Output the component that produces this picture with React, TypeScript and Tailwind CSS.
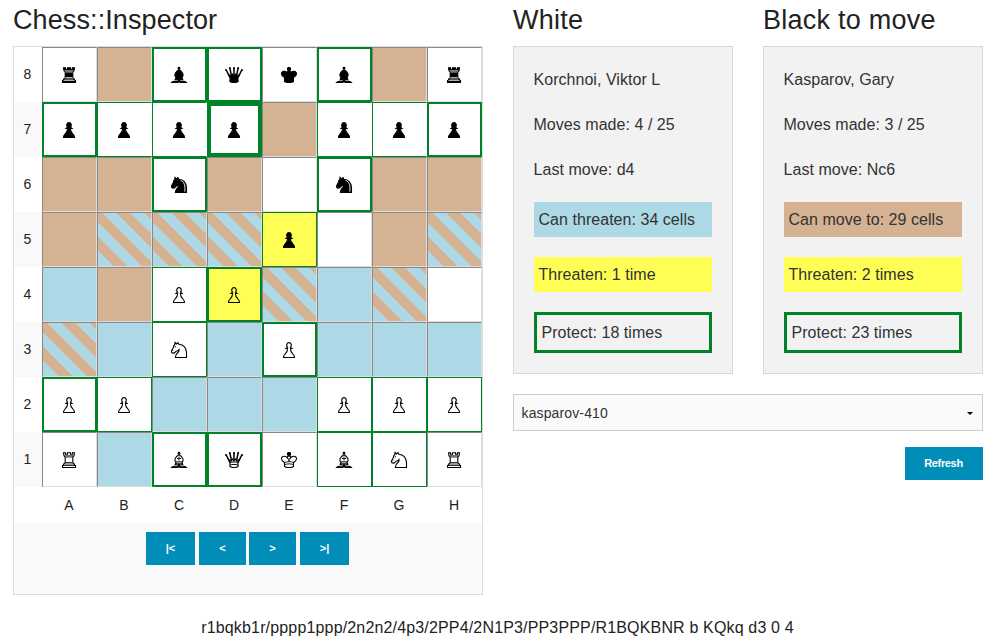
import React from "react";

type Fill = "w" | "t" | "b" | "s" | "y";
type Edge = "n" | "1" | "o" | "2" | "4";

const fills: Record<Fill, string> = {
  w: "bg-white",
  t: "bg-[#d4b292]",
  b: "bg-[#acd9e5]",
  s: "bg-[repeating-linear-gradient(45deg,#d4b292,#d4b292_0.7px,#acd9e5_0.7px,#acd9e5_10.7px,#d4b292_10.7px,#d4b292_20px)]",
  y: "bg-[#fffe54]",
};

const edges: Record<Edge, string> = {
  n: "border border-t-[#888] border-l-[#888] border-r-[#ddd] border-b-[#ddd]",
  "1": "border border-[#008328]",
  o: "border border-[#008328] border-r-white",
  "2": "border-2 border-[#008328]",
  "4": "border-4 border-[#008328]",
};

// Each square is written as fill, edge and an optional piece (upper case is white).
const board: string[][] = [
  ["wnr", "tn", "w2b", "w2q", "wnk", "w2b", "tn", "wnr"],
  ["w2p", "wop", "wop", "w4p", "tn", "wop", "wop", "w2p"],
  ["tn", "tn", "w2n", "tn", "wn", "w2n", "tn", "tn"],
  ["tn", "sn", "sn", "sn", "y1p", "wn", "tn", "sn"],
  ["bn", "tn", "w1P", "y2P", "sn", "bn", "sn", "wn"],
  ["sn", "bn", "w1N", "bn", "w2P", "bn", "bn", "bn"],
  ["w2P", "w1P", "bn", "bn", "bn", "w1P", "w1P", "w1P"],
  ["wnR", "bn", "w2B", "w2Q", "wnK", "w1B", "w1N", "wnR"],
];

function Piece({ kind }: { kind: string }) {
  const black = kind === kind.toLowerCase();
  const line = { stroke: "#000", strokeWidth: 1.1, fill: black ? "#000" : "none" };
  let art: React.ReactNode = null;
  switch (kind.toLowerCase()) {
    case "p":
      art = (
        <path
          {...line}
          d="M7.5 5.2C6 3.400 6.800.6 9 .6s3 2.800 1.500 4.600L12 6.500h-1.600c0 3 .9 4.300 2.600 5.600 1 .8 1.500 1.600 1.500 3.400h-11c0-1.800.5-2.600 1.500-3.400 1.700-1.300 2.600-2.600 2.600-5.600H6z"
        />
      );
      break;
    case "r":
      art = (
        <>
          <path
            {...line}
            d="M3.500.8h2v1.500h2V.8h3v1.500h2V.8h2l-.5 3-1.200 1.200v5.500l1 1.500h.7v1.500h1v2h-13v-2h1V12h.7l1-1.500V5L4 3.800z"
          />
          <path
            d="M4.500 3.800h9M5.500 5h7M5.500 10.500h7M4.500 12h9M3.500 13.500h11"
            stroke={black ? "#ddd" : "#000"}
            strokeWidth={0.8}
            fill="none"
          />
        </>
      );
      break;
    case "n":
      art = (
        <>
          <path
            {...line}
            d="M5.300 15.500c0-2.500 1-3.700 3-5.500.9-.8.900-1.500.700-2.500-.700 1.300-1.700 1.500-2.800 1.700L4.500 11l-1-.2-.5.5c-1.200-.3-1.700-1.300-1.500-2.400l2-3.700.3-1.700 1-.8L5 .5l1.500 1.500L8 .6l.8 1.600c4.200.3 7.300 3.300 7.700 8.300v5z"
          />
          {black ? (
            <path d="M10.500 3.300c2.800.8 4.200 3.300 4.400 7v4.400" stroke="#fff" strokeWidth={0.9} fill="none" />
          ) : (
            <path d="M4.800 4.800h1.200M2.600 8.800l.8-.5" stroke="#000" strokeWidth={1} fill="none" />
          )}
        </>
      );
      break;
    case "b":
      art = (
        <>
          <circle {...line} cx="9" cy="1.300" r=".9" />
          <path {...line} d="M6 10.500C3.800 8 4.800 5.500 9 2.500c4.200 3 5.200 5.500 3 8l.8 2.200H5.200z" />
          <path {...line} d="M8.700 12.700c0 2-1.200 1.500-3 1.500-2 0-3-.1-4.200 1.300h5.200c1.300 0 2-.3 2.300-1 .3.700 1 1 2.300 1h5.200c-1.200-1.400-2.200-1.300-4.200-1.300-1.800 0-3 .5-3-1.500z" />
          {!black && (
            <path d="M9 4.500v4M7 6.500h4M6 9.800h6M5.500 11.300h7" stroke="#000" strokeWidth={0.9} fill="none" />
          )}
        </>
      );
      break;
    case "q":
      art = (
        <>
          <path
            d="M4.800 10L1.200 3M6.500 9L4.900 1.200M9 9V.8M11.500 9l1.600-7.800M13.200 10L16.800 3"
            stroke="#000"
            strokeWidth={1.5}
            fill="none"
          />
          <path
            {...line}
            d="M4.800 10.500L3.400 7.300l2.700 1.900L7.300 7l1.700 2 1.700-2 1.200 2.200 2.700-1.900-1.400 3.200c-.5 1-.5 1.500-.1 2.500v1.500c-2 1.300-6.200 1.300-8.200 0V13c.4-1 .4-1.500-.1-2.500z"
          />
          <g fill="#000">
            <circle cx="1" cy="2.900" r="1" />
            <circle cx="4.800" cy="1.100" r="1" />
            <circle cx="9" cy="1" r="1" />
            <circle cx="13.200" cy="1.100" r="1" />
            <circle cx="17" cy="2.900" r="1" />
          </g>
          {!black && <path d="M4.700 10.700c2.500-1 6.100-1 8.600 0M5 13c2.200-.8 5.800-.8 8 0" stroke="#000" fill="none" />}
        </>
      );
      break;
    case "k":
      art = (
        <>
          <path d="M9 0v4.500" stroke="#000" strokeWidth={3} fill="none" />
          <path d="M7 2h4" stroke="#000" strokeWidth={2.2} fill="none" />
          <path
            {...line}
            d="M4.500 10.500C1.800 8.800.9 7.200 1.800 5.500c1.100-1.800 4.200-1.500 5.700.3C7.300 4.500 8 3.800 9 3.800s1.700.7 1.500 2c1.500-1.800 4.600-2.100 5.700-.3.900 1.700 0 3.300-2.700 5v4c-2 1.300-7 1.300-9 0z"
          />
          {!black && (
            <path
              d="M7.500 5.800C8.500 7 9 8 9 9.500c0-1.500.5-2.500 1.500-3.700M4.500 10.500c2.500-1.100 6.500-1.100 9 0M4.500 12.700c2.500-1.100 6.500-1.100 9 0"
              stroke="#000"
              strokeWidth={0.9}
              fill="none"
            />
          )}
        </>
      );
      break;
  }
  return (
    <svg width="19" height="17" viewBox="0 -1 19 17" className="mb-px" aria-hidden="true">
      {art}
    </svg>
  );
}

function Square({ code }: { code: string }) {
  return (
    <div
      className={`flex h-[55px] w-[55px] items-center justify-center ${fills[code[0] as Fill]} ${edges[code[1] as Edge]}`}
    >
      {code[2] && <Piece kind={code[2]} />}
    </div>
  );
}

function NavButton({ label, className }: { label: string; className: string }) {
  return (
    <button className={`h-[33px] bg-[#008db8] text-[11px] font-bold text-white ${className}`}>{label}</button>
  );
}

interface PlayerProps {
  title: string;
  name: string;
  moves: string;
  last: string;
  reach: string;
  reachClass: string;
  threaten: string;
  protect: string;
}

function Player(p: PlayerProps) {
  return (
    <section className="w-[220px]">
      <h2 className="h-[46px] pt-px text-[27px] leading-[38px] tracking-[0.25px] whitespace-nowrap text-[#222]">{p.title}</h2>
      <div className="flex h-[328px] flex-col gap-5 border border-[#d8d8d8] bg-[#f2f2f2] p-5 text-[16px] leading-[25px] tracking-[0.04px] whitespace-nowrap text-[#333]">
        <p className="-ml-[0.5px]">{p.name}</p>
        <p className="-ml-[0.5px]">{p.moves}</p>
        <p className="-ml-[0.5px]">{p.last}</p>
        <p className={`py-[5px] pl-[4.5px] ${p.reachClass}`}>{p.reach}</p>
        <p className="bg-[#fffe54] py-[5px] pl-[4.5px]">{p.threaten}</p>
        <p className="border-[3px] border-[#008328] py-[5px] pl-[4.5px]">{p.protect}</p>
      </div>
    </section>
  );
}

export default function App() {
  return (
    <main className="h-[643px] w-[997px] overflow-hidden bg-white font-['Liberation_Sans',Arial,sans-serif] text-[#222]">
      <div className="flex gap-[30px] pl-[13px]">
        <section className="w-[470px]">
          <h1 className="h-[46px] pt-px text-[27px] leading-[38px] tracking-[0.1px]">Chess::Inspector</h1>
          <div className="h-[549px] border border-[#ddd] bg-[#f9f9f9]">
            {board.map((row, r) => (
              <div key={r} className={`flex ${r % 2 ? "bg-[#f9f9f9]" : "bg-white"}`}>
                <div className="flex w-[28px] items-center justify-center pr-px text-[14px]">{8 - r}</div>
                {row.map((code, c) => (
                  <Square key={c} code={code} />
                ))}
              </div>
            ))}
            <div className="flex h-[36px] items-center bg-white pl-[28px] text-[14px]">
              {"ABCDEFGH".split("").map((f) => (
                <div key={f} className="w-[55px] pr-px text-center">{f}</div>
              ))}
            </div>
            <div className="flex pt-[9px] pl-[132px]">
              <NavButton label="|<" className="mr-1 w-[49px]" />
              <NavButton label="<" className="mr-[3px] w-[47px]" />
              <NavButton label=">" className="mr-1 w-[47px]" />
              <NavButton label=">|" className="w-[49px]" />
            </div>
          </div>
        </section>
        <div className="w-[470px]">
          <div className="flex gap-[30px]">
            <Player
              title="White"
              name="Korchnoi, Viktor L"
              moves="Moves made: 4 / 25"
              last="Last move: d4"
              reach="Can threaten: 34 cells"
              reachClass="bg-[#acd9e5]"
              threaten="Threaten: 1 time"
              protect="Protect: 18 times"
            />
            <Player
              title="Black to move"
              name="Kasparov, Gary"
              moves="Moves made: 3 / 25"
              last="Last move: Nc6"
              reach="Can move to: 29 cells"
              reachClass="bg-[#d4b292]"
              threaten="Threaten: 2 times"
              protect="Protect: 23 times"
            />
          </div>
          <div className="mt-5 flex h-[37px] items-center justify-between border border-[#ccc] bg-[#fafafa] pt-px pr-[9px] pl-[7.5px] text-[14px] tracking-[0.13px] text-[#333]">
            <span>kasparov-410</span>
            <svg width="6" height="3" viewBox="0 0 6 3">
              <path d="M0 0h6L3 3z" fill="#000" />
            </svg>
          </div>
          <div className="mt-4 flex justify-end">
            <NavButton label="Refresh" className="w-[78px] pr-px tracking-[-0.35px]" />
          </div>
        </div>
      </div>
      <p className="mt-[20px] pr-[2px] text-center text-[16px] leading-[25px] tracking-[0.16px] text-[#222]">
        r1bqkb1r/pppp1ppp/2n2n2/4p3/2PP4/2N1P3/PP3PPP/R1BQKBNR b KQkq d3 0 4
      </p>
    </main>
  );
}
